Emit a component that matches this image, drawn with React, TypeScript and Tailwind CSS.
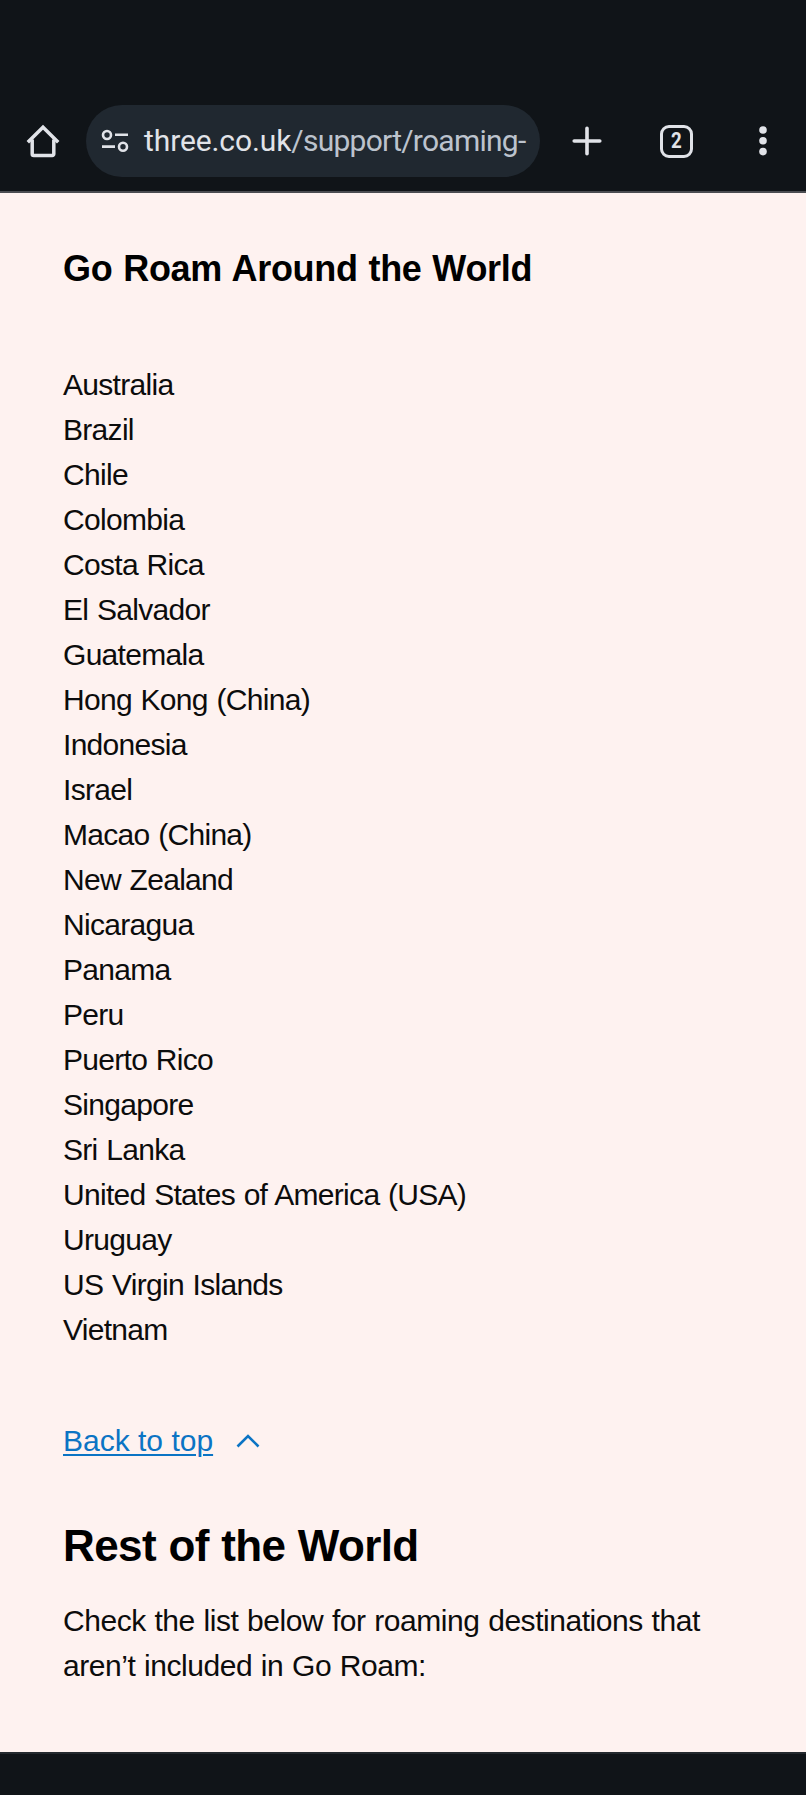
import React from "react";

const destinations = [
  "Australia",
  "Brazil",
  "Chile",
  "Colombia",
  "Costa Rica",
  "El Salvador",
  "Guatemala",
  "Hong Kong (China)",
  "Indonesia",
  "Israel",
  "Macao (China)",
  "New Zealand",
  "Nicaragua",
  "Panama",
  "Peru",
  "Puerto Rico",
  "Singapore",
  "Sri Lanka",
  "United States of America (USA)",
  "Uruguay",
  "US Virgin Islands",
  "Vietnam",
];

const HomeIcon = () => (
  <svg className="h-9 w-9" viewBox="0 0 36 36" fill="none" stroke="currentColor" strokeWidth="3.5">
    <path d="M2.800 19.200 18 4.200l15.200 15" />
    <path d="M7.200 16.500V31a1.500 1.500 0 0 0 1.500 1.500h18.600a1.500 1.500 0 0 0 1.500-1.500V16.500" />
  </svg>
);

const SiteSettingsIcon = () => (
  <svg className="h-6 w-7 shrink-0" viewBox="0 0 28 24" fill="none" stroke="currentColor" strokeWidth="2.6">
    <circle cx="6" cy="6" r="4" />
    <path d="M14 5.800h13M1 17.600h13" />
    <circle cx="22" cy="17.700" r="4" />
  </svg>
);

const BrowserBar = () => (
  <header className="flex h-[193px] items-end border-b-2 border-[#4b4d52] bg-[#101418] pb-[14px] text-[#e1e3e8]">
    <div className="flex h-[72px] w-[86px] items-center justify-center">
      <HomeIcon />
    </div>
    <div className="flex h-[72px] w-[454px] items-center rounded-full bg-[#202830] pl-[15px]">
      <SiteSettingsIcon />
      <span className="ml-[15px] whitespace-nowrap font-['Roboto',sans-serif] text-[30px] leading-9 text-[#bcc3cd]">
        <span className="tracking-[-0.1px] text-[#e1e3e8]">three.co.uk</span>
        <span className="tracking-[-0.75px]">/support/roaming-</span>
      </span>
    </div>
    <div className="flex h-[72px] flex-1 items-center">
      <svg className="ml-8 h-[30px] w-[30px]" viewBox="0 0 30 30" stroke="currentColor" strokeWidth="3.6" strokeLinecap="round">
        <path d="M15 2.2v25.6M2.2 15h25.6" />
      </svg>
      <div className="ml-[58px] flex h-[33px] w-[33px] items-center justify-center rounded-[9px] border-[3px] border-current font-['Roboto',sans-serif] text-[22px] leading-none font-bold">
        <span className="scale-x-85">2</span>
      </div>
      <svg className="ml-[66px] h-[30px] w-2" viewBox="0 0 8 30" fill="currentColor">
        <circle cx="4" cy="4" r="3.8" />
        <circle cx="4" cy="14.800" r="3.800" />
        <circle cx="4" cy="25.600" r="3.800" />
      </svg>
    </div>
  </header>
);

const App: React.FC = () => (
  <div className="flex h-[1795px] w-[806px] flex-col overflow-hidden bg-[#101418] font-['Liberation_Sans',sans-serif]">
    <BrowserBar />
    <main className="h-[1559px] bg-[#fef2f0] px-[63px] pt-[52px] text-[30px] leading-[45px] text-[#0c0c0c]">
      <h2 className="text-[36px] leading-[48px] font-bold tracking-[-0.3px] text-black [word-spacing:1.1px]">
        Go Roam Around the World
      </h2>
      <ul className="mt-[69px] tracking-[-0.7px] [word-spacing:1px]">
        {destinations.map((name) => (
          <li key={name}>{name}</li>
        ))}
      </ul>
      <div className="mt-[66px] flex items-center text-[#0b74c4]">
        <a href="#" className="underline decoration-2 underline-offset-[3px]">
          Back to top
        </a>
        <svg className="ml-[23px] h-[14px] w-6" viewBox="0 0 24 14" fill="none" stroke="currentColor" strokeWidth="2.6">
          <path d="M1.500 12.500 12 2l10.500 10.500" />
        </svg>
      </div>
      <h1 className="mt-[55px] text-[44px] leading-[56px] font-bold tracking-[-0.6px] text-black [word-spacing:0.8px]">
        Rest of the World
      </h1>
      <p className="mt-6 tracking-[-0.45px] [word-spacing:0.8px]">
        Check the list below for roaming destinations that
        <br />
        aren’t included in Go Roam:
      </p>
    </main>
    <div className="h-0.5 bg-[#24292e]" />
  </div>
);

export default App;
